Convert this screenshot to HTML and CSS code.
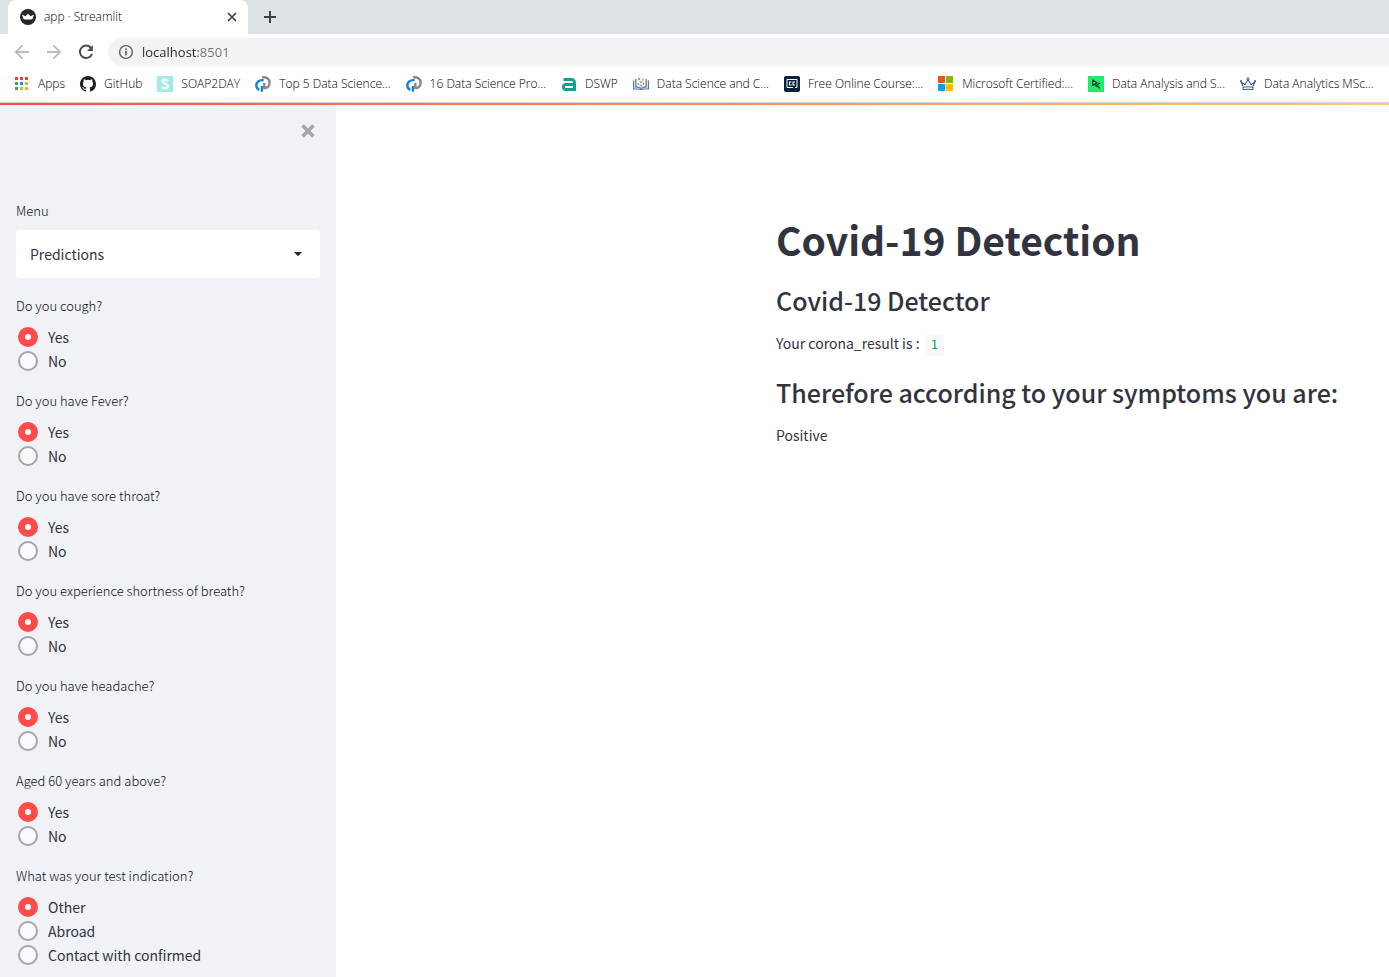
FILE: index.html
```html
<!DOCTYPE html>
<html lang="en">
<head>
<meta charset="utf-8">
<title>app · Streamlit</title>
<link rel="stylesheet" href="styles.css">
</head>
<body>
<header class="browser">
  <div class="tabs">
    <div class="tab">
      <svg class="icon" viewBox="0 0 16 16"><circle cx="8" cy="8" r="8" fill="#262730"/><path d="M2 5.600 5.500 7.200 8 4.800 10.500 7.200 14 5.600 12.400 10.200Q8 11 3.600 10.200Z" fill="#fff"/></svg>
      <span class="tab-title">app · Streamlit</span>
      <button class="plain" aria-label="Close tab"><svg width="16" height="16" viewBox="0 0 16 16"><path d="m4 4 8 8m0-8-8 8" stroke="#3c4043" stroke-width="1.700"/></svg></button>
    </div>
    <button class="plain" aria-label="New tab"><svg width="16" height="16" viewBox="0 0 16 16"><path d="M8 2v12M2 8h12" stroke="#3c4043" stroke-width="2"/></svg></button>
  </div>
  <div class="toolbar">
    <button class="plain" aria-label="Back"><svg width="16" height="16" viewBox="0 0 16 16"><path d="M15 8H2M8.500 1.300 1.800 8l6.700 6.700" fill="none" stroke="#babcbe" stroke-width="1.800"/></svg></button>
    <button class="plain" aria-label="Forward"><svg width="16" height="16" viewBox="0 0 16 16"><path d="M1 8h13M7.500 1.300 14.200 8l-6.700 6.700" fill="none" stroke="#babcbe" stroke-width="1.800"/></svg></button>
    <button class="plain" aria-label="Reload"><svg width="16" height="16" viewBox="0 0 16 16"><path d="M13.200 4.200A6.200 6.200 0 1 0 14 9.800" fill="none" stroke="#4a4d51" stroke-width="2"/><path d="M14.900 1v6H9z" fill="#4a4d51"/></svg></button>
    <div class="omnibox">
      <svg class="icon" viewBox="0 0 16 16"><circle cx="8" cy="8" r="6.400" fill="none" stroke="#5f6368" stroke-width="1.400"/><path d="M8 7v4.600M8 4.300v1.600" stroke="#5f6368" stroke-width="1.600"/></svg>
      <input class="address" type="text" value="localhost:8501" aria-label="Address">
    </div>
  </div>
  <nav class="bookmarks" aria-label="Bookmarks">
    <a href="#"><svg class="icon" viewBox="0 0 16 16"><path d="M1 1h3v3H1zM6 1h3v3H6zM11 1h3v3h-3z" fill="#ea4335"/><path d="M1 6h3v3H1zM1 11h3v3H1z" fill="#34a853"/><path d="M6 6h3v3H6z" fill="#1a8cf0"/><path d="M11 6h3v3h-3zM6 11h3v3H6zM11 11h3v3h-3z" fill="#f5b021"/></svg>Apps</a>
    <a href="#"><svg class="icon" viewBox="0 0 16 16"><path fill="#1b1f23" d="M8 0C3.580 0 0 3.580 0 8c0 3.540 2.290 6.530 5.470 7.590.4.070.55-.17.55-.38 0-.19-.01-.82-.01-1.490-2.010.37-2.530-.49-2.690-.94-.09-.23-.48-.94-.82-1.130-.28-.15-.68-.52-.01-.53.630-.01 1.080.58 1.230.820.720 1.210 1.870.870 2.330.660.070-.52.280-.87.510-1.070-1.780-.2-3.640-.89-3.640-3.950 0-.87.310-1.590.820-2.150-.08-.2-.36-1.020.080-2.120 0 0 .67-.21 2.200.820a7.600 7.600 0 0 1 4 0c1.530-1.040 2.200-.82 2.200-.82.440 1.100.160 1.920.080 2.120.510.560.820 1.270.820 2.150 0 3.070-1.870 3.750-3.650 3.950.290.250.540.730.540 1.480 0 1.070-.01 1.930-.01 2.200 0 .21.150.460.550.380A8.010 8.010 0 0 0 16 8c0-4.420-3.580-8-8-8Z"/></svg>GitHub</a>
    <a href="#"><svg class="icon" viewBox="0 0 16 16"><path fill="#a0ebe5" d="M0 0h16v16H0z"/><path d="M10.800 4.800C9.500 3.200 5.700 3.300 5.700 5.600c0 2.400 5.200 1.900 5.200 4.500 0 2.700-4.400 2.700-5.900.8" fill="none" stroke="#fff" stroke-width="2.300"/></svg>SOAP2DAY</a>
    <a href="#"><svg class="icon" viewBox="0 0 16 16" fill="none" stroke-width="2.400"><path d="M7 1.400c4-.9 7.700 1.600 7.700 5.400 0 3-2.200 5.200-5.400 5.300V7" stroke="#85888d"/><path d="M8.600 4.200C4 3.600 1.300 6.400 1.300 9.300c0 2 1 3.700 3 4.700M6.900 15.800V10" stroke="#1683d3"/></svg>Top 5 Data Science...</a>
    <a href="#"><svg class="icon" viewBox="0 0 16 16" fill="none" stroke-width="2.400"><path d="M7 1.400c4-.9 7.700 1.600 7.700 5.400 0 3-2.200 5.200-5.400 5.300V7" stroke="#85888d"/><path d="M8.600 4.200C4 3.600 1.300 6.400 1.300 9.300c0 2 1 3.700 3 4.700M6.900 15.800V10" stroke="#1683d3"/></svg>16 Data Science Pro...</a>
    <a href="#"><svg class="icon" viewBox="0 0 16 16"><path d="M2.500 3.500H10q3.500 0 3.500 3.500v6.500H5q-2.500 0-2.500-2.400T5 8.600h8.500" fill="none" stroke="#12a18b" stroke-width="3"/></svg>DSWP</a>
    <a href="#"><svg class="icon" viewBox="0 0 16 16"><path d="M.6 4.500v8.500h5.800q1.600 1 3.200 0h5.800V4.500" fill="none" stroke="#4c7596" stroke-width="1.200"/><path d="M2.800 3v8q3-.4 5.200 1.500Q10.200 10.600 13.200 11V3" fill="none" stroke="#5f87a4" stroke-width="1.400"/><path d="m5 4 3 3 3-3M5 8l3 2 3-2" fill="none" stroke="#efc4b4" stroke-width=".8"/><g fill="#e96552"><circle cx="6" cy="3" r="1.100"/><circle cx="10.500" cy="7.500" r="1"/></g><g fill="#6dbf91"><circle cx="8" cy="6" r="1.100"/><circle cx="5.200" cy="8" r="1"/></g><circle cx="10" cy="3.500" r="1.100" fill="#efb43c"/><circle cx="8" cy="9.500" r="1" fill="#d56bb5"/></svg>Data Science and C...</a>
    <a href="#"><svg class="icon" viewBox="0 0 16 16"><rect width="16" height="16" rx="2" fill="#08213b"/><path d="M3 11.500v-8h10v8h-2M3 11.500h6" fill="none" stroke="#fff"/><path d="M7.500 6h-2v3h2M11 6H9v3h2" fill="none" stroke="#fff" stroke-width="1.100"/></svg>Free Online Course:...</a>
    <a href="#"><svg class="icon" viewBox="0 0 16 16"><path fill="#f25022" d="M0 0h7v7H0z"/><path fill="#7fba00" d="M8 0h7v7H8z"/><path fill="#00a4ef" d="M0 8h7v7H0z"/><path fill="#ffb900" d="M8 8h7v7H8z"/></svg>Microsoft Certified:...</a>
    <a href="#"><svg class="icon" viewBox="0 0 16 16"><path fill="#1fec68" d="M0 0h16v16H0z"/><path d="M4.800 10V4L9 6.800 4.800 9.500M12 7 8.800 9.200 11.800 12.300M7 8.300l2 2.500" fill="none" stroke="#06372b" stroke-width="1.200"/></svg>Data Analysis and S...</a>
    <a href="#"><svg class="icon" viewBox="0 0 16 16" fill="none" stroke="#455b8f"><path d="M3.200 10.500 1 6l3.800 2.500L8 4l3.200 4.500L15 6l-2.200 4.500M3 13.800q5-1 10 0M3.200 11.200q4.800-1 9.600 0M3 11v3M13 11v3" stroke-width="1.100"/><circle cx="8" cy="2.800" r="1.100"/><circle cx="1" cy="5" r=".6"/><circle cx="15" cy="5" r=".6"/></svg>Data Analytics MSc...</a>
  </nav>
</header>
<div class="decoration"></div>
<div class="app">
  <aside class="sidebar">
    <div class="sidebar-top"><button class="plain" aria-label="Close sidebar"><svg width="16" height="16" viewBox="0 0 16 16"><path d="m2.600 2.600 10.800 10.800m0-10.800L2.600 13.400" stroke="#a3a5ae" stroke-width="3.600"/></svg></button></div>
    <form class="fields">
      <div class="field">
        <label class="caption" for="menu">Menu</label>
        <div class="select"><select id="menu"><option>Predictions</option></select><svg class="caret" viewBox="0 0 8 4"><path d="M0 0h8L4.800 3.600q-.8.600-1.600 0z" fill="#262730"/></svg></div>
      </div>
      <fieldset class="field"><legend class="caption">Do you cough?</legend><label class="option"><input type="radio" name="cough" checked>Yes</label><label class="option"><input type="radio" name="cough">No</label></fieldset>
      <fieldset class="field"><legend class="caption">Do you have Fever?</legend><label class="option"><input type="radio" name="fever" checked>Yes</label><label class="option"><input type="radio" name="fever">No</label></fieldset>
      <fieldset class="field"><legend class="caption">Do you have sore throat?</legend><label class="option"><input type="radio" name="throat" checked>Yes</label><label class="option"><input type="radio" name="throat">No</label></fieldset>
      <fieldset class="field"><legend class="caption">Do you experience shortness of breath?</legend><label class="option"><input type="radio" name="breath" checked>Yes</label><label class="option"><input type="radio" name="breath">No</label></fieldset>
      <fieldset class="field"><legend class="caption">Do you have headache?</legend><label class="option"><input type="radio" name="headache" checked>Yes</label><label class="option"><input type="radio" name="headache">No</label></fieldset>
      <fieldset class="field"><legend class="caption">Aged 60 years and above?</legend><label class="option"><input type="radio" name="age" checked>Yes</label><label class="option"><input type="radio" name="age">No</label></fieldset>
      <fieldset class="field"><legend class="caption">What was your test indication?</legend><label class="option"><input type="radio" name="indication" checked>Other</label><label class="option"><input type="radio" name="indication">Abroad</label><label class="option"><input type="radio" name="indication">Contact with confirmed</label></fieldset>
    </form>
  </aside>
  <main class="main">
    <h1>Covid-19 Detection</h1>
    <h2>Covid-19 Detector</h2>
    <p>Your corona_result is : <code>1</code></p>
    <h2>Therefore according to your symptoms you are:</h2>
    <p>Positive</p>
  </main>
</div>
</body>
</html>
```
FILE: styles.css
```css
* { box-sizing: border-box; }

body {
  margin: 0;
  min-height: 100vh;
  display: flex;
  flex-direction: column;
  background: #fff;
  color: #31333f;
  font: 14px/24px "Noto Sans CJK SC", "Noto Sans", sans-serif;
}

svg { display: block; }
.icon { width: 16px; height: 16px; flex: none; }

.plain {
  display: block;
  padding: 0;
  border: 0;
  background: none;
  cursor: pointer;
}

/* Browser chrome */
.browser {
  font: 300 12px/16px "Open Sans", "Noto Sans", sans-serif;
  color: #000;
  border-bottom: 1px solid #d3d5d8;
}

.tabs {
  display: flex;
  align-items: center;
  gap: 14px;
  height: 34px;
  padding-left: 8px;
  background: #dee1e6;
}

.tab {
  display: flex;
  align-items: center;
  gap: 8px;
  width: 240px;
  height: 34px;
  padding: 0 8px 0 12px;
  border-radius: 8px 8px 0 0;
  background: #fff;
}

.tab-title { flex: 1; }

.toolbar {
  display: flex;
  align-items: center;
  gap: 16px;
  height: 36px;
  padding-left: 14px;
}

.omnibox {
  flex: 1;
  display: flex;
  align-items: center;
  gap: 8px;
  height: 28px;
  margin-left: -2px;
  padding-left: 10px;
  border-radius: 14px 0 0 14px;
  background: #f1f3f4;
}

.address {
  flex: 1;
  padding: 0;
  border: 0;
  outline: 0;
  font: 13px/20px "Open Sans", "Noto Sans", sans-serif;
  color: transparent;
  background: linear-gradient(90deg, #202124 56px, #6b6f74 56px);
  -webkit-background-clip: text;
  background-clip: text;
}

.bookmarks {
  display: flex;
  align-items: center;
  gap: 15px;
  height: 32px;
  padding: 0 14px 4px;
  overflow: hidden;
}

.bookmarks a {
  display: flex;
  align-items: center;
  gap: 8px;
  flex: none;
  color: inherit;
  text-decoration: none;
  white-space: nowrap;
}

.decoration {
  height: 2px;
  background: linear-gradient(90deg, #ff4b4b, #fffd80) 0 0 / 140% 100%;
}

/* Application */
.app { flex: 1; display: flex; }

.sidebar {
  flex: none;
  width: 336px;
  padding: 18px 16px 10px;
  background: #f0f2f6;
}

.sidebar-top {
  display: flex;
  justify-content: flex-end;
  height: 78px;
  padding-right: 4px;
}

.sidebar-top .plain { align-self: flex-start; }

.fields { display: grid; gap: 18px; }

.field {
  min-width: 0;
  margin: 0;
  padding: 0;
  border: 0;
}

.caption {
  display: block;
  margin-bottom: 9px;
  padding: 0;
  color: #0e1017;
  font-size: 13px;
  font-weight: 300;
  line-height: 20px;
}

.select { position: relative; }

.select select {
  display: block;
  width: 100%;
  height: 48px;
  padding: 0 14px;
  border: 0;
  border-radius: 4px;
  appearance: none;
  background: #fff;
  color: inherit;
  font: inherit;
}

.caret {
  position: absolute;
  top: 22px;
  right: 18px;
  width: 8px;
  height: 4px;
  pointer-events: none;
}

.option {
  display: flex;
  align-items: center;
  gap: 10px;
  padding-left: 2px;
}

.option input {
  appearance: none;
  width: 20px;
  height: 20px;
  margin: 0;
  border: 2px solid #a3a5ae;
  border-radius: 50%;
  background: #fafafc;
}

.option input:checked {
  border: 7px solid #ff4b4b;
  background: #fff;
}

.main {
  flex: 1;
  min-width: 0;
  padding: 108px 16px 24px 440px;
}

h1, h2, p { margin: 0; }

h1 {
  margin-bottom: 18px;
  font-size: 39px;
  line-height: 52px;
  font-weight: 700;
}

h2 {
  margin-bottom: 14px;
  font-size: 25px;
  line-height: 34px;
  font-weight: 500;
}

p { margin-bottom: 20px; }

code {
  margin-left: 2px;
  padding: 4px 6px;
  border-radius: 4px;
  background: #f8f9fb;
  color: #09ab3b;
  font: 12px/16px "DejaVu Sans Mono", monospace;
}
```
